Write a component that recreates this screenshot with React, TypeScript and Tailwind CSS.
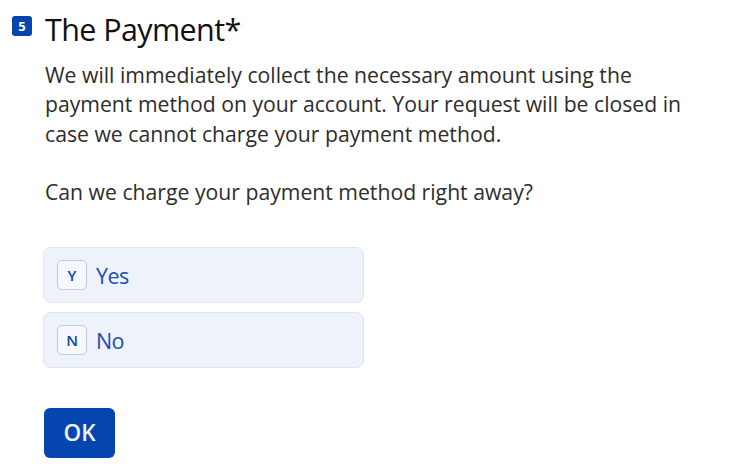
import React from "react";

function Choice({ k, label }: { k: string; label: string }) {
  return (
    <div className="flex items-center w-[321px] h-[56px] rounded-[8px] border border-[#dde4f2] bg-[#eef2fa] pl-[13px]">
      <div className="flex items-center justify-center w-[30px] h-[30px] rounded-[5px] border border-[#b9cae9] bg-[#f6f8fd] text-[15px] font-semibold text-[#0c46ad] leading-none">
        {k}
      </div>
      <span className="ml-[9px] text-[21.5px] tracking-[-0.6px] text-[#1c4fb0] leading-none pt-[2px]">{label}</span>
    </div>
  );
}

export default function App() {
  return (
    <div
      className="w-[752px] h-[475px] bg-white overflow-hidden"
      style={{ fontFamily: '"Open Sans", "Noto Sans", sans-serif' }}
    >
      <div className="flex items-start pt-[12px]">
        <div className="ml-[12px] mt-[4px] w-[20px] h-[20px] rounded-[3px] bg-[#0445af] flex items-center justify-center text-[13px] font-bold text-white leading-none">
          5
        </div>
        <h1 className="ml-[13px] text-[30.5px] leading-[34px] text-[#111] tracking-[-0.6px]">The Payment*</h1>
      </div>
      <div className="pl-[45px] pt-[14px] text-[21.2px] leading-[29.3px] text-[#2d2d2d]">
        <p>
          We will immediately collect the necessary amount using the
          <br />
          payment method on your account. Your request will be closed in
          <br />
          case we cannot charge your payment method.
        </p>
        <p className="mt-[29px]">Can we charge your payment method right away?</p>
      </div>
      <div className="pl-[43px] pt-[41px] flex flex-col gap-[9px]">
        <Choice k="Y" label="Yes" />
        <Choice k="N" label="No" />
      </div>
      <div className="pl-[44px] pt-[40px]">
        <button className="w-[71px] h-[50px] rounded-[6px] bg-[#0445af] text-[22.5px] font-semibold text-[#eef2fa] leading-none">
          OK
        </button>
      </div>
    </div>
  );
}
